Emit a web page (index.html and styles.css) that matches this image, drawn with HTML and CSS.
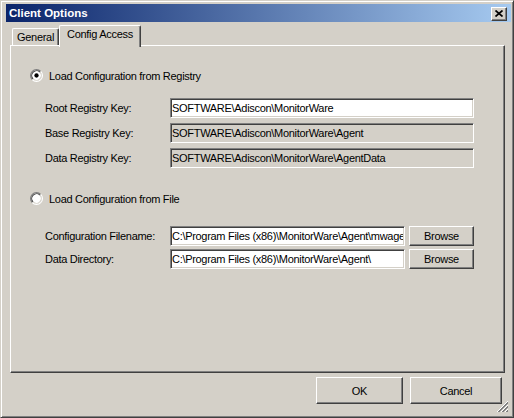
FILE: index.html
```html
<!DOCTYPE html>
<html lang="en">
<head>
  <meta charset="UTF-8" />
  <title>Client Options</title>
  <link rel="stylesheet" href="styles.css">
</head>
<body>
  <div class="window">
    <!-- Title bar -->
    <div class="titlebar">
      <span class="title">Client Options</span>
      <button class="close" aria-label="Close">
        <svg width="8" height="7" viewBox="0 0 8 7">
          <path d="M0.5 0.5 L7.5 6.5 M7.5 0.5 L0.5 6.5" stroke="#000" stroke-width="1.7" fill="none"/>
        </svg>
      </button>
    </div>

    <div class="content">
      <div class="tabs">
        <div class="tab">General</div>
        <div class="tab active">Config Access</div>
      </div>

      <div class="panel">
        <!-- Registry source -->
        <label class="radio-row">
          <svg class="radio" width="13" height="13" viewBox="0 0 12 12">
            <circle cx="6" cy="6" r="5" fill="#fff"/>
            <path d="M2.11 9.89 A5.5 5.5 0 0 1 9.89 2.11" stroke="#808080" fill="none"/>
            <path d="M9.89 2.11 A5.5 5.5 0 0 1 2.11 9.89" stroke="#fff" fill="none"/>
            <path d="M2.82 9.18 A4.5 4.5 0 0 1 9.18 2.82" stroke="#404040" fill="none"/>
            <path d="M9.18 2.82 A4.5 4.5 0 0 1 2.82 9.18" stroke="#d4d0c8" fill="none"/>
            <circle cx="6" cy="6" r="2" fill="#000"/>
          </svg>
          Load Configuration from Registry
        </label>

        <div class="fields registry">
          <div class="field">
            <span class="field-label">Root Registry Key:</span>
            <input class="textbox wide" type="text" value="SOFTWARE\Adiscon\MonitorWare">
          </div>
          <div class="field">
            <span class="field-label">Base Registry Key:</span>
            <input class="textbox wide" type="text" value="SOFTWARE\Adiscon\MonitorWare\Agent" readonly>
          </div>
          <div class="field">
            <span class="field-label">Data Registry Key:</span>
            <input class="textbox wide" type="text" value="SOFTWARE\Adiscon\MonitorWare\AgentData" readonly>
          </div>
        </div>

        <!-- File source -->
        <label class="radio-row second">
          <svg class="radio" width="13" height="13" viewBox="0 0 12 12">
            <circle cx="6" cy="6" r="5" fill="#fff"/>
            <path d="M2.11 9.89 A5.5 5.5 0 0 1 9.89 2.11" stroke="#808080" fill="none"/>
            <path d="M9.89 2.11 A5.5 5.5 0 0 1 2.11 9.89" stroke="#fff" fill="none"/>
            <path d="M2.82 9.18 A4.5 4.5 0 0 1 9.18 2.82" stroke="#404040" fill="none"/>
            <path d="M9.18 2.82 A4.5 4.5 0 0 1 2.82 9.18" stroke="#d4d0c8" fill="none"/>
          </svg>
          Load Configuration from File
        </label>

        <div class="fields files">
          <div class="field">
            <span class="field-label">Configuration Filename:</span>
            <input class="textbox short" type="text" value="C:\Program Files (x86)\MonitorWare\Agent\mwagent.cfg">
            <button class="btn browse">Browse</button>
          </div>
          <div class="field">
            <span class="field-label">Data Directory:</span>
            <input class="textbox short" type="text" value="C:\Program Files (x86)\MonitorWare\Agent\">
            <button class="btn browse">Browse</button>
          </div>
        </div>
      </div>

      <div class="actions">
        <button class="btn ok">OK</button>
        <button class="btn cancel">Cancel</button>
      </div>
    </div>

    <!-- Size grip in the corner -->
    <svg class="grip" width="13" height="13" viewBox="0 0 13 13">
      <path d="M12 1 L1 12 M12 5 L5 12 M12 9 L9 12" stroke="#fff" fill="none"/>
      <path d="M12 2 L2 12 M12 3 L3 12 M12 6 L6 12 M12 7 L7 12 M12 10 L10 12 M12 11 L11 12" stroke="#808080" fill="none"/>
    </svg>
  </div>
</body>
</html>
```

FILE: styles.css
```css
* {
  box-sizing: border-box;
}

body {
  margin: 0;
  width: 514px;
  height: 418px;
  overflow: hidden;
  background-color: #d4d0c8;
  font-family: "Liberation Sans", Arial, sans-serif;
  font-size: 11px;
  letter-spacing: -0.3px;
  color: #000;
}

.window {
  position: relative;
  width: 514px;
  height: 418px;
  padding: 3px 2px 3px 5px;
  background-color: #d4d0c8;
  border: 1px solid;
  border-color: #d4d0c8 #404040 #404040 #d4d0c8;
  box-shadow: inset 1px 1px #fff, inset -1px -1px #808080;
  display: flex;
  flex-direction: column;
}

.titlebar {
  height: 18px;
  display: flex;
  align-items: center;
  justify-content: space-between;
  padding: 0 4px 0 3px;
  background: linear-gradient(to right, #0a246a, #a6caf0);
}

.title {
  color: #fff;
  font-weight: bold;
  font-size: 11.5px;
  letter-spacing: 0;
}

.close {
  width: 16px;
  height: 14px;
  padding: 0;
  margin-top: 1px;
  display: flex;
  align-items: center;
  justify-content: center;
  background-color: #d4d0c8;
  border: 1px solid;
  border-color: #fff #404040 #404040 #fff;
  box-shadow: inset -1px -1px #808080;
}

.content {
  padding: 3px 6px 0 4px;
  display: flex;
  flex-direction: column;
}

/* Tab strip */
.tabs {
  display: flex;
  align-items: flex-end;
  padding-left: 2px;
  height: 20px;
  position: relative;
  z-index: 1;
}

.tab {
  height: 17px;
  padding: 2px 4px 0 4px;
  background-color: #d4d0c8;
  border-left: 1px solid #fff;
  border-top: 1px solid #fff;
  border-right: 1px solid #404040;
  border-top-left-radius: 2px;
  border-top-right-radius: 2px;
  box-shadow: inset -1px 0 #808080;
  white-space: nowrap;
}

.tab.active {
  height: 22px;
  margin-bottom: -2px;
  padding: 2px 7px 0 7px;
}

.panel {
  height: 328px;
  border: 1px solid;
  border-color: #fff #404040 #404040 #fff;
  box-shadow: inset -1px -1px #808080;
  padding: 23px 0 0 18px;
}

.radio-row {
  display: flex;
  align-items: center;
  gap: 6px;
  height: 13px;
  margin-left: 1px;
}

.radio-row.second {
  margin-top: 24px;
}

.fields {
  display: flex;
  flex-direction: column;
  padding-left: 16px;
}

.fields.registry {
  margin-top: 16px;
  gap: 5px;
}

.fields.files {
  margin-top: 21px;
  gap: 3px;
}

.field {
  display: flex;
  align-items: center;
}

.field-label {
  width: 125px;
  flex-shrink: 0;
}

.textbox {
  height: 20px;
  margin: 0;
  padding: 0 1px;
  font: inherit;
  letter-spacing: inherit;
  color: #000;
  background-color: #fff;
  border: 1px solid;
  border-color: #808080 #fff #fff #808080;
  box-shadow: inset 1px 1px #404040, inset -1px -1px #d4d0c8;
  outline: none;
}

.textbox[readonly] {
  background-color: #d4d0c8;
}

.textbox.wide {
  width: 304px;
}

.textbox.short {
  width: 235px;
}

.btn {
  margin: 0;
  padding: 0;
  font: inherit;
  letter-spacing: inherit;
  color: #000;
  background-color: #d4d0c8;
  border: 1px solid;
  border-color: #fff #404040 #404040 #fff;
  box-shadow: inset -1px -1px #808080;
}

.browse {
  width: 65px;
  height: 20px;
  margin-left: 4px;
}

.actions {
  display: flex;
  justify-content: flex-end;
  gap: 7px;
  padding: 4px 3px 0 0;
}

.ok {
  width: 87px;
  height: 27px;
}

.cancel {
  width: 92px;
  height: 27px;
}

.grip {
  position: absolute;
  right: 4px;
  bottom: 4px;
}
```
